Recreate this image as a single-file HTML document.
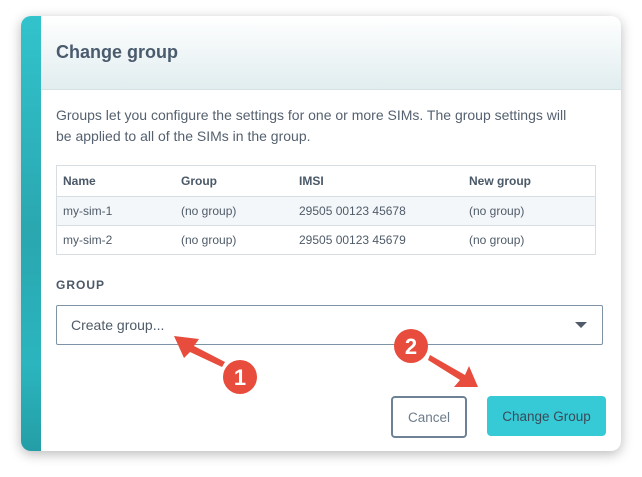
<!DOCTYPE html>
<html><head><style>
body{margin:0;width:642px;height:477px;background:#fff;font-family:"Liberation Sans",sans-serif;position:relative;overflow:hidden}
.card{position:absolute;left:21px;top:16px;width:600px;height:435px;border-radius:10px;background:#fff;box-shadow:0 3px 12px rgba(0,0,0,.28);overflow:hidden}
.strip{position:absolute;left:0;top:0;width:20px;height:100%;background:linear-gradient(180deg,#32c3cc,#2aa7b0 50%,#2bb5be 80%,#249ea6)}
.hdr{position:absolute;left:20px;top:0;right:0;height:73px;background:linear-gradient(180deg,#fff,#e1edef);border-bottom:1px solid #d5e2e5}
.hdr h1{margin:0;position:absolute;left:15px;top:26px;font-size:18px;color:#4a5b6d;font-weight:bold}
.t{position:absolute;color:#55616f;font-size:14px}
table{position:absolute;left:35px;top:149px;width:540px;border-collapse:collapse;font-size:12px;color:#4f5b68}
td,th{border-top:1px solid #d6dde3;height:28px;padding:0 0 0 6px;text-align:left}
th{height:30px;font-weight:bold;color:#4a5867}
table{border:1px solid #d6dde3}
tr.a{background:#f4f7fa}
.sel{position:absolute;left:35px;top:289px;width:545px;height:38px;border:1px solid #7f93a6;border-radius:2px;font-size:14px;color:#4f5b68}
.btn{position:absolute;top:380px;height:38px;border-radius:4px;font-size:13.5px;display:flex;align-items:center;justify-content:center}
</style></head><body>
<div class="card">
<div class="strip"></div>
<div class="hdr"><h1>Change group</h1></div>
<div class="t" style="left:35px;top:89px;line-height:21px;width:560px;white-space:nowrap">Groups let you configure the settings for one or more SIMs. The group settings will<br>be applied to all of the SIMs in the group.</div>
<table>
<tr><th style="width:112px">Name</th><th style="width:112px">Group</th><th style="width:164px">IMSI</th><th>New group</th></tr>
<tr class="a"><td>my-sim-1</td><td>(no group)</td><td>29505 00123 45678</td><td>(no group)</td></tr>
<tr><td>my-sim-2</td><td>(no group)</td><td>29505 00123 45679</td><td>(no group)</td></tr>
</table>
<div class="t" style="left:35px;top:262px;font-size:12px;font-weight:bold;letter-spacing:1px;color:#4a5867">GROUP</div>
<div class="sel"><span style="position:absolute;left:14px;top:11px">Create group...</span>
<span style="position:absolute;right:15px;top:16px;width:0;height:0;border-left:6px solid transparent;border-right:6px solid transparent;border-top:6px solid #4f5b68"></span></div>
<div class="btn" style="left:370px;width:72px;border:2px solid #6d8296;color:#6d7c8b">Cancel</div>
<div class="btn" style="left:466px;width:119px;height:40px;background:#36cad6;color:#3a4a5a">Change Group</div>
</div>
<svg width="642" height="477" style="position:absolute;left:0;top:0">
<g fill="#e74c3c">
<polygon points="174,336 199,339 194,346 225,362 222,367 190,352 184,358"/>
<polygon points="430,355 465,375 469,366 478,387 454,387 460,380 428,360"/>
<circle cx="240" cy="377" r="17"/>
<circle cx="411" cy="346" r="17"/>
</g>
<g fill="#fff" font-family="Liberation Sans" font-weight="bold" font-size="22" text-anchor="middle">
<text x="240" y="385">1</text><text x="411" y="354">2</text>
</g>
</svg>
</body></html>
